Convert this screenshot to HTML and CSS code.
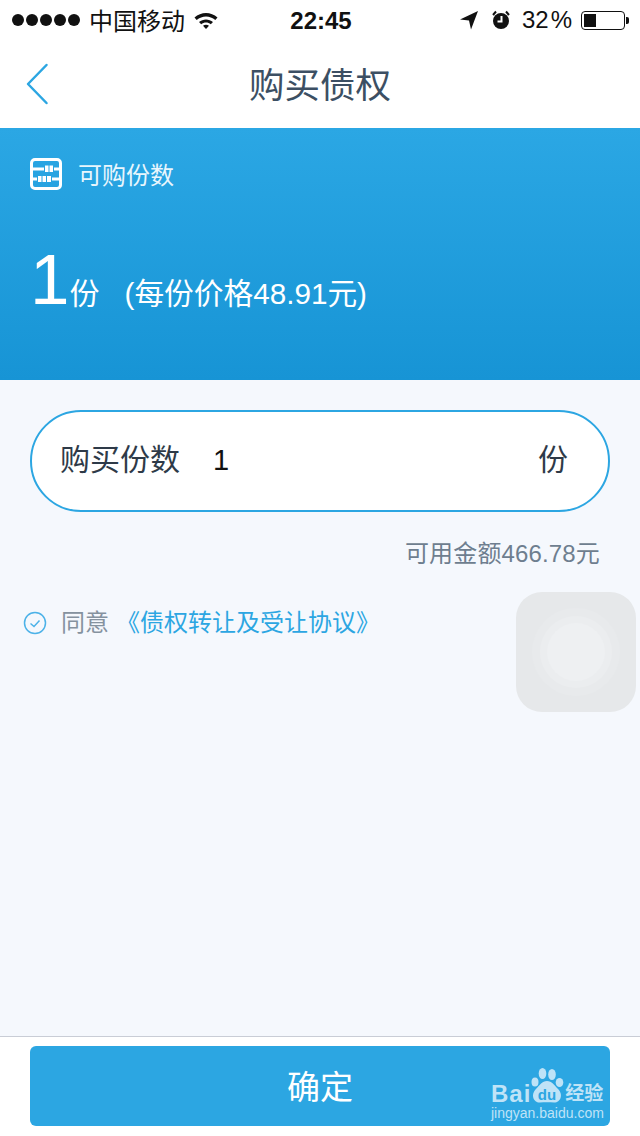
FILE: index.html
```html
<!DOCTYPE html>
<html lang="zh">
<head>
<meta charset="utf-8">
<title>购买债权</title>
<link rel="stylesheet" href="styles.css">
</head>
<body>
<div class="screen">
  <header class="status">
    <div class="status-left">
      <span class="dots"><i></i><i></i><i></i><i></i><i></i></span>
      <span class="carrier">中国移动</span>
      <svg class="wifi" width="26" height="20" viewBox="0 0 26 20"><path d="M1.5 7.500C8 1.500 18 1.500 24.500 7.500L22.300 9.900C17 5.200 9 5.200 3.700 9.900Z"/><path d="M6 12C10 8.500 16 8.500 20 12L17.800 14.300C15 12 11 12 8.200 14.300Z"/><path d="M10 15.800C11.800 14.500 14.200 14.500 16 15.800L13 19Z"/></svg>
    </div>
    <div class="time">22:45</div>
    <div class="status-right">
      <svg class="loc" width="20" height="20" viewBox="0 0 20 20"><path d="M19 1L1 9.500 10 10.500 12 19.500Z"/></svg>
      <svg class="alarm" width="22" height="22" viewBox="0 0 22 22"><circle cx="11" cy="12" r="8"/><path d="M3 6L6 2.500M19 6L16 2.500" class="alarm-ear"/><path d="M11.500 7V12.500H7.500" class="alarm-hand"/></svg>
      <span class="battery-text">32<span class="pct">%</span></span>
      <span class="battery"><span class="battery-fill"></span></span>
      <span class="battery-tip"></span>
    </div>
  </header>

  <nav class="nav">
    <svg class="back" width="24" height="44" viewBox="0 0 24 44"><path d="M21.500 2L3 21 21.500 40"/></svg>
    <h1 class="title">购买债权</h1>
  </nav>

  <section class="hero">
    <div class="hero-head">
      <svg class="abacus" width="32" height="32" viewBox="0 0 32 32">
        <rect x="1.500" y="1.500" width="29" height="29" rx="3.500" class="abacus-frame"/>
        <rect x="3" y="9.500" width="11" height="3"/>
        <rect x="15" y="7.500" width="3.500" height="6.500"/>
        <rect x="19.500" y="7.500" width="3.500" height="6.500"/>
        <rect x="24" y="9.500" width="5" height="3"/>
        <rect x="3" y="19.500" width="4" height="3"/>
        <rect x="8" y="18" width="3.500" height="6"/>
        <rect x="12.500" y="18" width="3.500" height="6"/>
        <rect x="17" y="18" width="4" height="6"/>
        <rect x="22" y="19.500" width="7" height="3"/>
      </svg>
      <span class="hero-label">可购份数</span>
    </div>
    <div class="hero-value">
      <span class="big">1</span>
      <span class="unit">份</span>
      <span class="price">(每份价格48.91元)</span>
    </div>
  </section>

  <main class="content">
    <div class="field">
      <span class="field-label">购买份数</span>
      <span class="field-value">1</span>
      <span class="field-unit">份</span>
    </div>
    <p class="balance">可用金额466.78元</p>
    <div class="agree">
      <svg class="check" width="24" height="24" viewBox="0 0 24 24"><circle cx="12" cy="12" r="10.500"/><path d="M7.500 12.500L11 15.500 16.500 9.500"/></svg>
      <span class="agree-text">同意</span>
      <span class="agree-link">《债权转让及受让协议》</span>
    </div>
  </main>

  <footer class="footer">
    <button class="confirm" type="button">确定</button>
  </footer>

  <div class="touch"><span class="touch-ring"><span class="touch-core"></span></span></div>

  <div class="mark">
    <div class="mark-top">
      <span class="mark-bai">Bai</span>
      <svg class="paw" width="36" height="38" viewBox="0 0 36 38">
        <ellipse cx="6" cy="16" rx="3.500" ry="4.500"/><ellipse cx="13.500" cy="7.500" rx="3.800" ry="5.500"/><ellipse cx="23" cy="8.500" rx="3.800" ry="5.500"/><ellipse cx="30.500" cy="16.500" rx="3.800" ry="4.500"/>
        <path d="M18 15C23 15 25 19 29 23C35 29 31 37 25 36.500C21 36 15 36 11 36.500C5 37 1 29 7 23C11 19 13 15 18 15Z"/>
        <text x="18" y="33.500" class="paw-text">du</text>
      </svg>
      <span class="mark-cn">经验</span>
    </div>
    <div class="mark-url">jingyan.baidu.com</div>
  </div>
</div>
</body>
</html>
```
FILE: styles.css
```css
* { box-sizing: border-box; margin: 0; padding: 0; }
html, body { width: 640px; height: 1136px; overflow: hidden; }
body { font-family: "Liberation Sans", "Noto Sans CJK SC", sans-serif; background: #f5f8fd; }
.screen { position: relative; width: 640px; height: 1136px; display: flex; flex-direction: column; }

.status { height: 40px; background: #fff; display: grid; grid-template-columns: 1fr auto 1fr; align-items: center; color: #111; padding: 0 11px 0 12px; }
.status-left { display: flex; align-items: center; }
.dots { display: flex; gap: 2px; }
.dots i { width: 12px; height: 12px; border-radius: 50%; background: #111; }
.carrier { font-size: 24px; margin-left: 9px; padding-bottom: 2px; }
.wifi { margin-left: 8px; fill: #111; }
.time { font-size: 24px; font-weight: 700; padding-top: 2px; margin-left: 1px; }
.status-right { display: flex; align-items: center; justify-content: flex-end; }
.loc { fill: #111; }
.alarm { margin-left: 11px; fill: #111; }
.alarm-ear { stroke: #111; stroke-width: 2; fill: none; }
.alarm-hand { stroke: #fff; stroke-width: 2; fill: none; }
.battery-text { font-size: 24px; margin-left: 10px; }
.pct { margin-left: 2px; }
.battery { width: 44px; height: 19px; border: 1.500px solid #111; border-radius: 4px; margin-left: 9px; padding: 2px; display: flex; }
.battery-fill { width: 12px; background: #111; }
.battery-tip { width: 3px; height: 7px; background: #111; margin-left: 1px; border-radius: 0 2px 2px 0; }

.nav { height: 88px; background: #fff; display: flex; align-items: center; justify-content: center; position: relative; }
.back { position: absolute; left: 25px; top: 23px; fill: none; stroke: #2ca6e2; stroke-width: 2.500; stroke-linecap: round; stroke-linejoin: round; }
.title { font-size: 35.500px; font-weight: 400; color: #3c4f63; line-height: 1; margin-top: 6px; }

.hero { height: 252px; background: linear-gradient(#2ba7e4, #1794d5); color: #fff; padding: 30px 30px 0; }
.hero-head { display: flex; align-items: center; height: 32px; }
.abacus { fill: #fff; flex: none; }
.abacus-frame { fill: none; stroke: #fff; stroke-width: 3; }
.hero-label { font-size: 24px; margin-left: 16px; padding-bottom: 2px; color: #e9f6fd; }
.hero-value { display: flex; align-items: baseline; margin-top: 48px; }
.big { font-size: 71px; line-height: 84px; font-weight: 400; }
.unit { font-size: 30px; }
.price { font-size: 29.700px; margin-left: 25px; }

.content { flex: 1; padding: 30px 30px 0; }
.field { height: 102px; background: #fff; border: 2px solid #2ca6e2; border-radius: 51px; display: flex; align-items: center; padding: 0 40px 0 28px; color: #2e3a48; font-size: 30px; }
.field-label { width: 153px; padding-bottom: 8px; }
.field-value { flex: 1; color: #111; font-size: 29px; padding-bottom: 1px; }
.field-unit { padding-bottom: 8px; }
.balance { text-align: right; font-size: 24px; letter-spacing: .15px; color: #6e7e8f; margin-top: 27px; line-height: 30px; padding-right: 10px; }
.agree { display: flex; align-items: center; margin-top: 37px; margin-left: -7px; height: 34px; font-size: 24px; }
.check { fill: none; stroke: #4cb2e8; stroke-width: 1.500; flex: none; }
.agree-text { margin-left: 14px; padding-bottom: 6px; color: #85929f; }
.agree-link { margin-left: 7px; padding-bottom: 6px; color: #2ca6e2; }

.footer { height: 100px; background: #fff; border-top: 1px solid #c9cdd6; padding: 9px 30px 0; }
.confirm { display: block; width: 580px; height: 80px; border: 0; border-radius: 6px; padding-bottom: 2px; background: #2ca6e2; color: #fff; font-family: inherit; font-size: 33px; }

.touch { position: absolute; left: 516px; top: 592px; width: 120px; height: 120px; border-radius: 26px; background: #e6e8ea; display: flex; align-items: center; justify-content: center; }
.touch-ring { width: 88px; height: 88px; border-radius: 50%; background: #e8eaec; display: flex; align-items: center; justify-content: center; }
.touch-core { width: 58px; height: 58px; border-radius: 50%; background: #eef0f2; box-shadow: 0 0 0 7px #ebedef; }

.mark { position: absolute; left: 491px; top: 1066px; width: 116px; color: #bfe3f7; }
.mark-top { display: flex; align-items: flex-end; height: 38px; }
.mark-bai { font-size: 24px; font-weight: 700; line-height: 20px; letter-spacing: 1px; }
.paw { fill: #bfe3f7; margin-left: -2px; flex: none; }
.paw-text { fill: #2ca6e2; font-size: 15px; font-weight: 700; text-anchor: middle; font-family: "Liberation Sans", sans-serif; }
.mark-cn { font-size: 19px; font-weight: 700; line-height: 20px; white-space: nowrap; }
.mark-url { font-size: 14px; line-height: 18px; white-space: nowrap; }
```
